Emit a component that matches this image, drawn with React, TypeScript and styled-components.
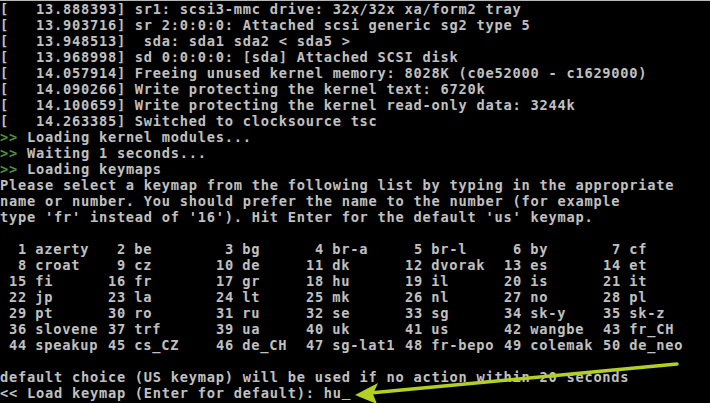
import styled, { createGlobalStyle } from "styled-components";

// every console cell is 9px wide and 16px tall
const CELL = 9;

const GlobalStyle = createGlobalStyle`
  html, body {
    margin: 0;
    padding: 0;
    background: #000;
  }
`;

const bootLog = [
  "[   13.888393] sr1: scsi3-mmc drive: 32x/32x xa/form2 tray",
  "[   13.903716] sr 2:0:0:0: Attached scsi generic sg2 type 5",
  "[   13.948513]  sda: sda1 sda2 < sda5 >",
  "[   13.968998] sd 0:0:0:0: [sda] Attached SCSI disk",
  "[   14.057914] Freeing unused kernel memory: 8028K (c0e52000 - c1629000)",
  "[   14.090266] Write protecting the kernel text: 6720k",
  "[   14.100659] Write protecting the kernel read-only data: 3244k",
  "[   14.263385] Switched to clocksource tsc",
];

const steps = ["Loading kernel modules...", "Waiting 1 seconds...", "Loading keymaps"];

const intro = [
  "Please select a keymap from the following list by typing in the appropriate",
  "name or number. You should prefer the name to the number (for example",
  "type 'fr' instead of '16'). Hit Enter for the default 'us' keymap.",
];

const keymaps: [number, string][][] = [
  [[1, "azerty"], [2, "be"], [3, "bg"], [4, "br-a"], [5, "br-l"], [6, "by"], [7, "cf"]],
  [[8, "croat"], [9, "cz"], [10, "de"], [11, "dk"], [12, "dvorak"], [13, "es"], [14, "et"]],
  [[15, "fi"], [16, "fr"], [17, "gr"], [18, "hu"], [19, "il"], [20, "is"], [21, "it"]],
  [[22, "jp"], [23, "la"], [24, "lt"], [25, "mk"], [26, "nl"], [27, "no"], [28, "pl"]],
  [[29, "pt"], [30, "ro"], [31, "ru"], [32, "se"], [33, "sg"], [34, "sk-y"], [35, "sk-z"]],
  [[36, "slovene"], [37, "trf"], [39, "ua"], [40, "uk"], [41, "us"], [42, "wangbe"], [43, "fr_CH"]],
  [[44, "speakup"], [45, "cs_CZ"], [46, "de_CH"], [47, "sg-lat1"], [48, "fr-bepo"], [49, "colemak"], [50, "de_neo"]],
];

const Screen = styled.div`
  position: relative;
  width: 710px;
  height: 403px;
  overflow: hidden;
  background: #000;
  border-top: 1px solid #b8b8b8;
  box-sizing: border-box;
  font-family: "DejaVu Sans Mono", "Liberation Mono", monospace;
  font-size: 13.7px;
  letter-spacing: 0.75px;
  font-weight: bold;
  color: #c0c0c0;
`;

const Line = styled.div`
  height: 16px;
  line-height: 16px;
  white-space: pre;
`;

const Marker = styled.span`
  color: #4a9438;
`;

const KeymapRow = styled.div`
  display: grid;
  grid-template-columns: ${[11, 12, 10, 11, 11, 11].map((n) => `${n * CELL}px`).join(" ")} auto;
  height: 16px;
  line-height: 16px;
  padding-left: ${CELL}px;
  white-space: pre;
`;

const Entry = styled.div`
  display: flex;
  gap: ${CELL}px;
`;

const Num = styled.span`
  width: ${2 * CELL}px;
  text-align: right;
  margin-right: -0.75px;
`;

const Cursor = styled.span`
  text-decoration: underline;
`;

const Arrow = styled.svg`
  position: absolute;
  left: 340px;
  top: 352px;
`;

export default function App() {
  return (
    <>
      <GlobalStyle />
      <Screen>
        {bootLog.map((l) => (
          <Line key={l}>{l}</Line>
        ))}
        {steps.map((s) => (
          <Line key={s}>
            <Marker>&gt;&gt;</Marker> {s}
          </Line>
        ))}
        {intro.map((l) => (
          <Line key={l}>{l}</Line>
        ))}
        <Line> </Line>
        {keymaps.map((row, i) => (
          <KeymapRow key={i}>
            {row.map(([n, name]) => (
              <Entry key={n}>
                <Num>{n}</Num>
                <span>{name}</span>
              </Entry>
            ))}
          </KeymapRow>
        ))}
        <Line> </Line>
        <Line>default choice (US keymap) will be used if no action within 20 seconds</Line>
        <Line>
          &lt;&lt; Load keymap (Enter for default): hu<Cursor> </Cursor>
        </Line>
        <Arrow width="350" height="51" viewBox="0 0 350 51">
          <line x1="337" y1="11" x2="30" y2="40" stroke="#b4cf24" strokeWidth="3.5" strokeLinecap="round" />
          <polygon points="15,42 38,30 33,41 37,51" fill="#b4cf24" />
        </Arrow>
      </Screen>
    </>
  );
}
